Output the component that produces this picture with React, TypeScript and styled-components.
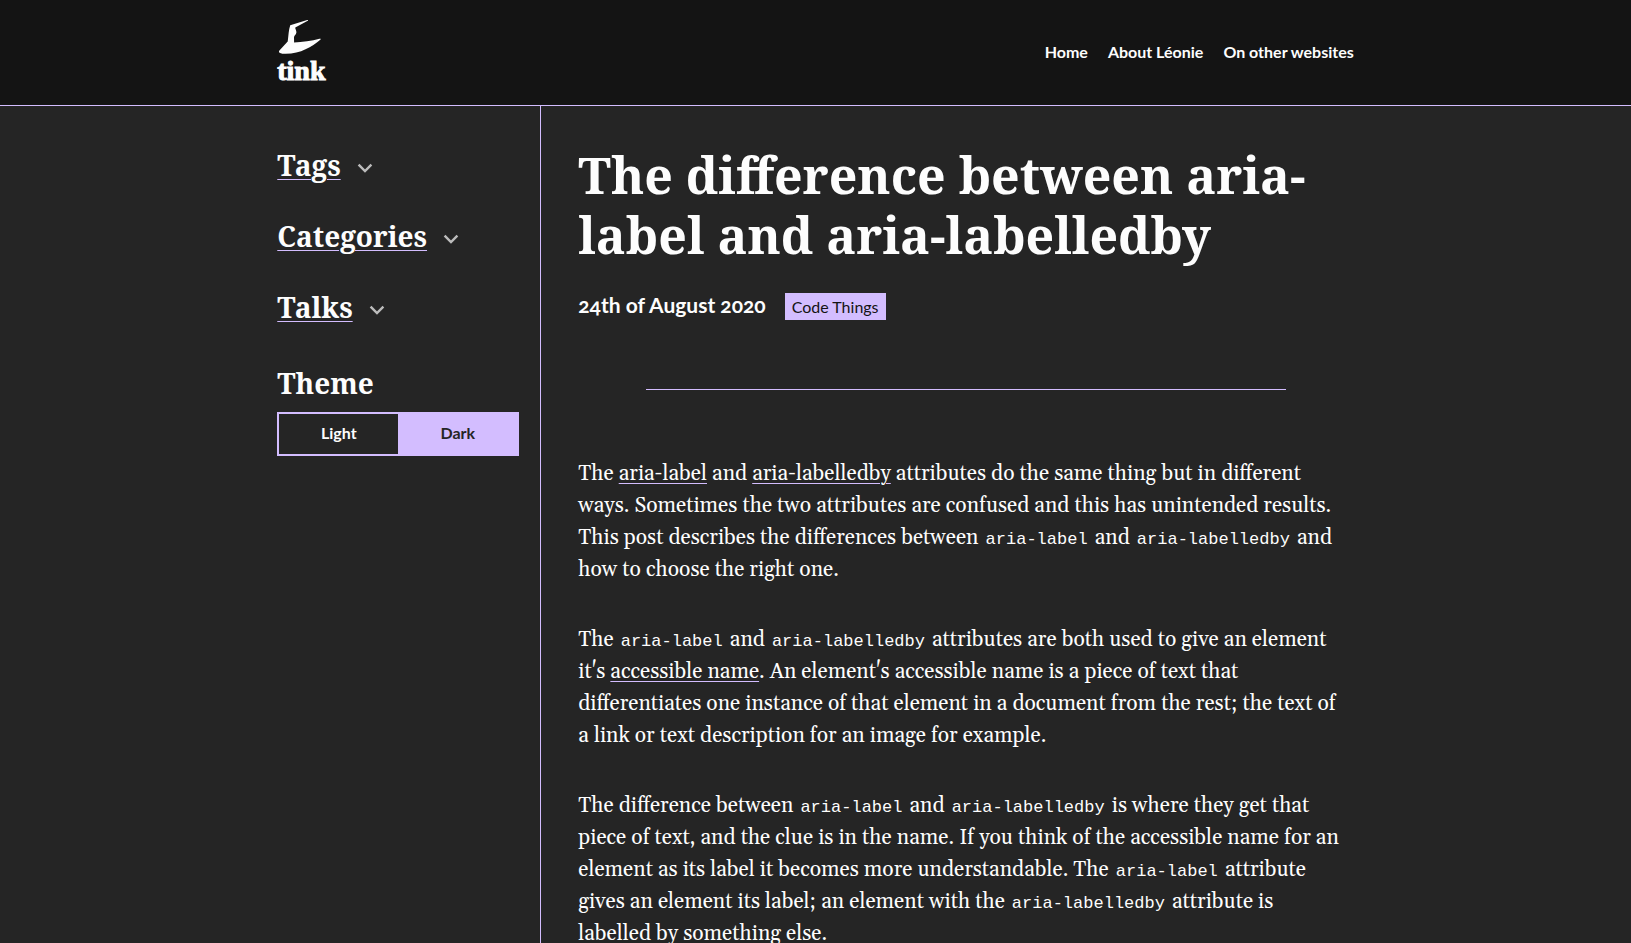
import React, { useState } from 'react';
import styled, { createGlobalStyle, css } from 'styled-components';

const color = {
  header: '#141414',
  page: '#252525',
  text: '#fdfdfd',
  accent: '#d3bdff',
  chevron: '#bcbcbc',
};

const font = {
  heading: '"Noto Serif", "DejaVu Serif Condensed", serif',
  body: 'Gelasio, "Noto Serif", serif',
  ui: 'Lato, "Open Sans", sans-serif',
  code: '"Liberation Mono", monospace',
  logo: '"Liberation Serif", serif',
};

const GlobalStyle = createGlobalStyle`
  *, *::before, *::after { box-sizing: border-box; }
  body {
    margin: 0;
    background: ${color.page};
    color: ${color.text};
    font-family: ${font.body};
    font-size: 21px;
    line-height: 32px;
  }
`;

const Page = styled.div`
  display: flex;
  flex-direction: column;
  min-height: 100vh;
`;

const Container = styled.div`
  width: 66%;
  min-width: 960px;
  margin: 0 auto;
  display: flex;
`;

const Header = styled.header`
  background: ${color.header};
  border-bottom: 1px solid ${color.accent};
`;

const HeaderRow = styled(Container)`
  height: 105px;
  padding-bottom: 1px;
  align-items: center;
  justify-content: space-between;
`;

const LogoLink = styled.a`
  display: flex;
  flex-direction: column;
  gap: 2px;
  color: ${color.text};
  text-decoration: none;
`;

const LogoText = styled.span`
  font: 700 28px/28px ${font.logo};
  -webkit-text-stroke: 1px currentColor;
`;

const NavList = styled.ul`
  display: flex;
  gap: 20px;
  margin: 0;
  padding: 0;
  list-style: none;
`;

const NavLink = styled.a`
  color: ${color.text};
  font: 700 16px/24px ${font.ui};
  text-decoration: none;
`;

const Columns = styled(Container)`
  flex: 1;
`;

const Sidebar = styled.aside`
  flex: 0 0 264px;
  display: flex;
  flex-direction: column;
  padding: 39px 21px 0 0;
  border-right: 1px solid ${color.accent};
`;

const Disclosure = styled.button`
  display: flex;
  align-items: center;
  gap: 16px;
  align-self: flex-start;
  margin: 0 0 31px;
  padding: 0;
  border: 0;
  background: none;
  color: ${color.text};
  cursor: pointer;
`;

const headingText = css`
  font: 700 28px/40px ${font.heading};
`;

const underline = css`
  text-decoration: underline;
  text-decoration-color: ${color.accent};
  text-decoration-thickness: 1px;
  text-underline-offset: 3px;
`;

const DisclosureLabel = styled.span`
  ${headingText}
  ${underline}
`;

const ThemeGroup = styled.fieldset`
  min-width: 0;
  margin: 5px 0 0;
  padding: 0;
  border: 0;
`;

const ThemeTitle = styled.legend`
  ${headingText}
  padding: 0;
`;

const Switcher = styled.div`
  display: flex;
  margin-top: 9px;
  border: 2px solid ${color.accent};
`;

const ThemeButton = styled.button<{ $active: boolean }>`
  flex: 1;
  height: 40px;
  padding: 0 0 2px;
  border: 0;
  background: ${p => (p.$active ? color.accent : 'transparent')};
  color: ${p => (p.$active ? color.page : color.text)};
  font: 700 16px/24px ${font.ui};
  cursor: pointer;
`;

const Article = styled.main`
  flex: 1;
  min-width: 0;
  padding: 39px 0 0 37px;
`;

const Title = styled.h1`
  margin: 0;
  font: 700 50px/60px ${font.heading};
`;

const Meta = styled.div`
  display: flex;
  align-items: baseline;
  gap: 19px;
  margin-top: 26px;
`;

const PostDate = styled.time`
  font: 700 21px/27px ${font.ui};
  font-variant-numeric: oldstyle-nums;
`;

const Tag = styled.a`
  padding: 0 7px;
  background: ${color.accent};
  color: ${color.header};
  font: 400 16px/27px ${font.ui};
  text-decoration: none;
`;

const Divider = styled.hr`
  width: 640px;
  max-width: 100%;
  margin: 69px auto 68px;
  border: 0;
  border-top: 1px solid ${color.accent};
`;

const Paragraph = styled.p`
  margin: 0 0 38px;
`;

const TextLink = styled.a`
  color: inherit;
  ${underline}
`;

const Code = styled.code`
  padding: 0 2px;
  font-family: ${font.code};
  font-size: 17px;
  line-height: 1;
`;

const ChevronIcon = styled.svg`
  margin-top: 6px;
`;

function Hat() {
  return (
    <svg width="46" height="36" viewBox="0 0 46 36" aria-hidden="true">
      <path
        fill="currentColor"
        d="M13.2 6.2 L30.2 1 C31.4 .7 31.3 1.6 30.3 2 L18.3 8.4 C17.8 9.4 19.6 11 19.4 13.6 C19.2 16 17.1 16.6 17 18.2 L17.1 23.4 C25 23.2 35 22 42.4 19.8 C44 19.3 44.2 20 43 21 C35 27.6 24 34.8 8.6 34.8 C3.5 34.8 .8 33.4 2.4 31.4 L10.7 22.4 C11.6 16 11.6 11 13.2 6.2 Z"
      />
    </svg>
  );
}

function Chevron() {
  return (
    <ChevronIcon width="16" height="10" viewBox="0 0 16 10" aria-hidden="true">
      <path d="M1.6 1.6 L8 8 L14.4 1.6" fill="none" stroke={color.chevron} strokeWidth="2.4" />
    </ChevronIcon>
  );
}

const navItems = ['Home', 'About Léonie', 'On other websites'];
const sections = ['Tags', 'Categories', 'Talks'];
const themes = ['Light', 'Dark'];

export default function App() {
  const [theme, setTheme] = useState('Dark');
  return (
    <Page>
      <GlobalStyle />
      <Header>
        <HeaderRow>
          <LogoLink href="#">
            <Hat />
            <LogoText>tink</LogoText>
          </LogoLink>
          <nav>
            <NavList>
              {navItems.map(item => (
                <li key={item}>
                  <NavLink href="#">{item}</NavLink>
                </li>
              ))}
            </NavList>
          </nav>
        </HeaderRow>
      </Header>
      <Columns>
        <Sidebar>
          {sections.map(name => (
            <Disclosure key={name} type="button" aria-expanded={false}>
              <DisclosureLabel>{name}</DisclosureLabel>
              <Chevron />
            </Disclosure>
          ))}
          <ThemeGroup>
            <ThemeTitle>Theme</ThemeTitle>
            <Switcher>
              {themes.map(name => (
                <ThemeButton
                  key={name}
                  type="button"
                  $active={theme === name}
                  aria-pressed={theme === name}
                  onClick={() => setTheme(name)}
                >
                  {name}
                </ThemeButton>
              ))}
            </Switcher>
          </ThemeGroup>
        </Sidebar>
        <Article>
          <Title>The difference between aria-label and aria-labelledby</Title>
          <Meta>
            <PostDate dateTime="2020-08-24">24th of August 2020</PostDate>
            <Tag href="#">Code Things</Tag>
          </Meta>
          <Divider />
          <Paragraph>
            The <TextLink href="#">aria-label</TextLink> and <TextLink href="#">aria-labelledby</TextLink> attributes do
            the same thing but in different ways. Sometimes the two attributes are confused and this has unintended
            results. This post describes the differences between <Code>aria-label</Code> and{' '}
            <Code>aria-labelledby</Code> and how to choose the right one.
          </Paragraph>
          <Paragraph>
            The <Code>aria-label</Code> and <Code>aria-labelledby</Code> attributes are both used to give an element
            it's <TextLink href="#">accessible name</TextLink>. An element's accessible name is a piece of text that
            differentiates one instance of that element in a document from the rest; the text of a&nbsp;link or text
            description for an image for example.
          </Paragraph>
          <Paragraph>
            The difference between <Code>aria-label</Code> and <Code>aria-labelledby</Code> is where they get that
            piece of text, and the clue is in the name. If you think of the accessible name for an element as its label
            it becomes more understandable. The <Code>aria-label</Code> attribute gives an element its label; an
            element with the <Code>aria-labelledby</Code> attribute is labelled&nbsp;by something else.
          </Paragraph>
        </Article>
      </Columns>
    </Page>
  );
}
